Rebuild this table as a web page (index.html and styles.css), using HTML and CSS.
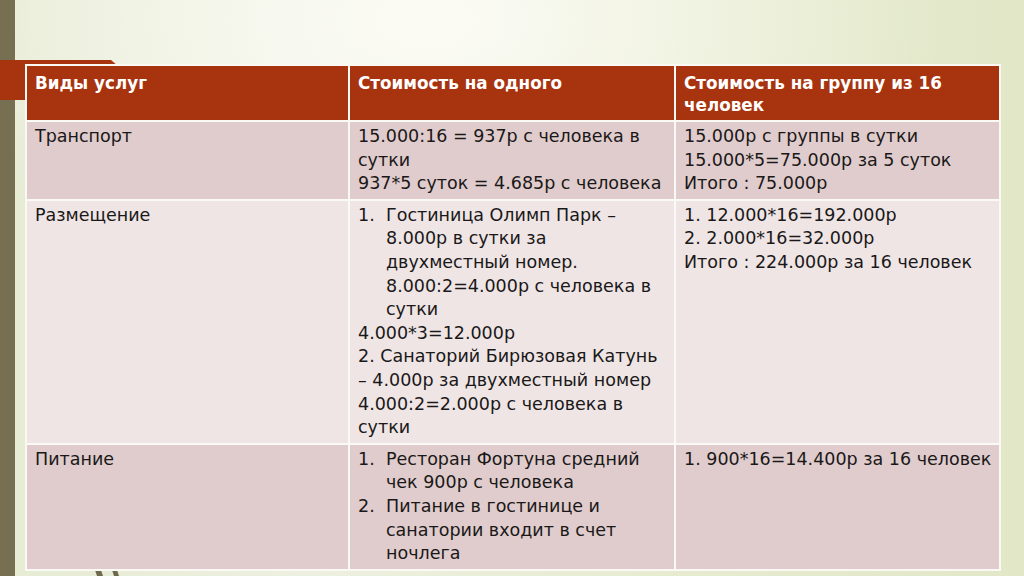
FILE: index.html
```html
<!DOCTYPE html>
<html lang="ru">
<head>
<meta charset="utf-8">
<title>Стоимость услуг</title>
<link rel="stylesheet" href="styles.css">
</head>
<body>
<div class="slide">
  <div class="side-bar"></div>
  <div class="red-tab"></div>
  <div class="strokes">
    <svg width="40" height="12" viewBox="0 0 40 12"><path d="M2 0 L8 0 L12 12 L6 12 Z" fill="#6f6a4e"/><path d="M19 0 L24 0 L28 12 L23 12 Z" fill="#6f6a4e"/></svg>
  </div>
  <main class="content">
    <table class="price-table">
      <colgroup>
        <col class="c1"><col class="c2"><col class="c3">
      </colgroup>
      <thead>
        <tr class="head">
          <th>Виды услуг</th>
          <th>Стоимость на одного</th>
          <th>Стоимость на группу из 16 человек</th>
        </tr>
      </thead>
      <tbody>
        <tr class="dark r-transport">
          <td>Транспорт</td>
          <td>15.000:16 = 937р с человека в сутки<br>937*5 суток = 4.685р с человека</td>
          <td>15.000р с группы в сутки<br>15.000*5=75.000р за 5 суток<br>Итого : 75.000р</td>
        </tr>
        <tr class="light r-stay">
          <td>Размещение</td>
          <td>
            <ol class="num-list">
              <li><span class="num">1.</span><span>Гостиница Олимп Парк – 8.000р в сутки за двухместный номер. 8.000:2=4.000р с человека в сутки</span></li>
            </ol>
            4.000*3=12.000р<br>2. Санаторий Бирюзовая Катунь – 4.000р за двухместный номер 4.000:2=2.000р с человека в сутки
          </td>
          <td>1. 12.000*16=192.000р<br>2. 2.000*16=32.000р<br>Итого : 224.000р за 16 человек</td>
        </tr>
        <tr class="dark r-food">
          <td>Питание</td>
          <td>
            <ol class="num-list">
              <li><span class="num">1.</span><span>Ресторан Фортуна средний чек 900р с человека</span></li>
              <li><span class="num">2.</span><span>Питание в гостинице и санатории входит в счет ночлега</span></li>
            </ol>
          </td>
          <td>1. 900*16=14.400р за 16 человек</td>
        </tr>
      </tbody>
    </table>
  </main>
</div>
</body>
</html>
```

FILE: styles.css
```css
* { box-sizing: border-box; }
html, body { margin: 0; padding: 0; }
body {
  width: 1024px;
  height: 576px;
  overflow: hidden;
  font-family: "DejaVu Sans", "Liberation Sans", sans-serif;
}
.slide {
  position: relative;
  width: 1024px;
  height: 576px;
  display: flex;
  overflow: hidden;
  background:
    radial-gradient(ellipse 520px 300px at 430px 20px, rgba(252,252,246,0.95), rgba(252,252,246,0) 100%),
    linear-gradient(90deg, #e6ebd3 0%, #edf0e0 30%, #e8ecd2 60%, #e1e7c7 100%);
}
.side-bar {
  flex: none;
  width: 15px;
  background: #766f52;
}
.red-tab {
  position: absolute;
  left: 0;
  top: 60px;
  width: 118px;
  height: 40px;
  background: #a8330f;
  clip-path: polygon(0 0, 111px 0, 118px 6px, 118px 100%, 0 100%);
}
.strokes {
  position: absolute;
  left: 92px;
  top: 567px;
  line-height: 0;
}
.content {
  flex: 1;
  padding: 64px 0 0 10px;
  position: relative;
}
.price-table {
  width: 974px;
  border-collapse: collapse;
  table-layout: fixed;
  color: #1a1818;
  font-size: 17.5px;
  line-height: 23.6px;
}
.price-table .c1 { width: 323px; }
.price-table .c2 { width: 326px; }
.price-table .c3 { width: 325px; }
.price-table th,
.price-table td {
  border: 2px solid #fbf9f6;
  text-align: left;
  vertical-align: top;
  padding: 3px 7px 3px 8px;
}
.head th {
  background: #a8330f;
  color: #ffffff;
  font-weight: bold;
  font-size: 16.8px;
  line-height: 22px;
  height: 56px;
  padding-top: 6px;
}
.dark td { background: #e0cccc; }
.light td { background: #efe5e5; }
.r-transport td { height: 78px; }
.r-stay td { height: 243px; }
.r-food td { height: 124px; }
.num-list {
  list-style: none;
  margin: 0;
  padding: 0;
}
.num-list li {
  display: flex;
}
.num-list .num {
  flex: none;
  width: 28px;
}
```
